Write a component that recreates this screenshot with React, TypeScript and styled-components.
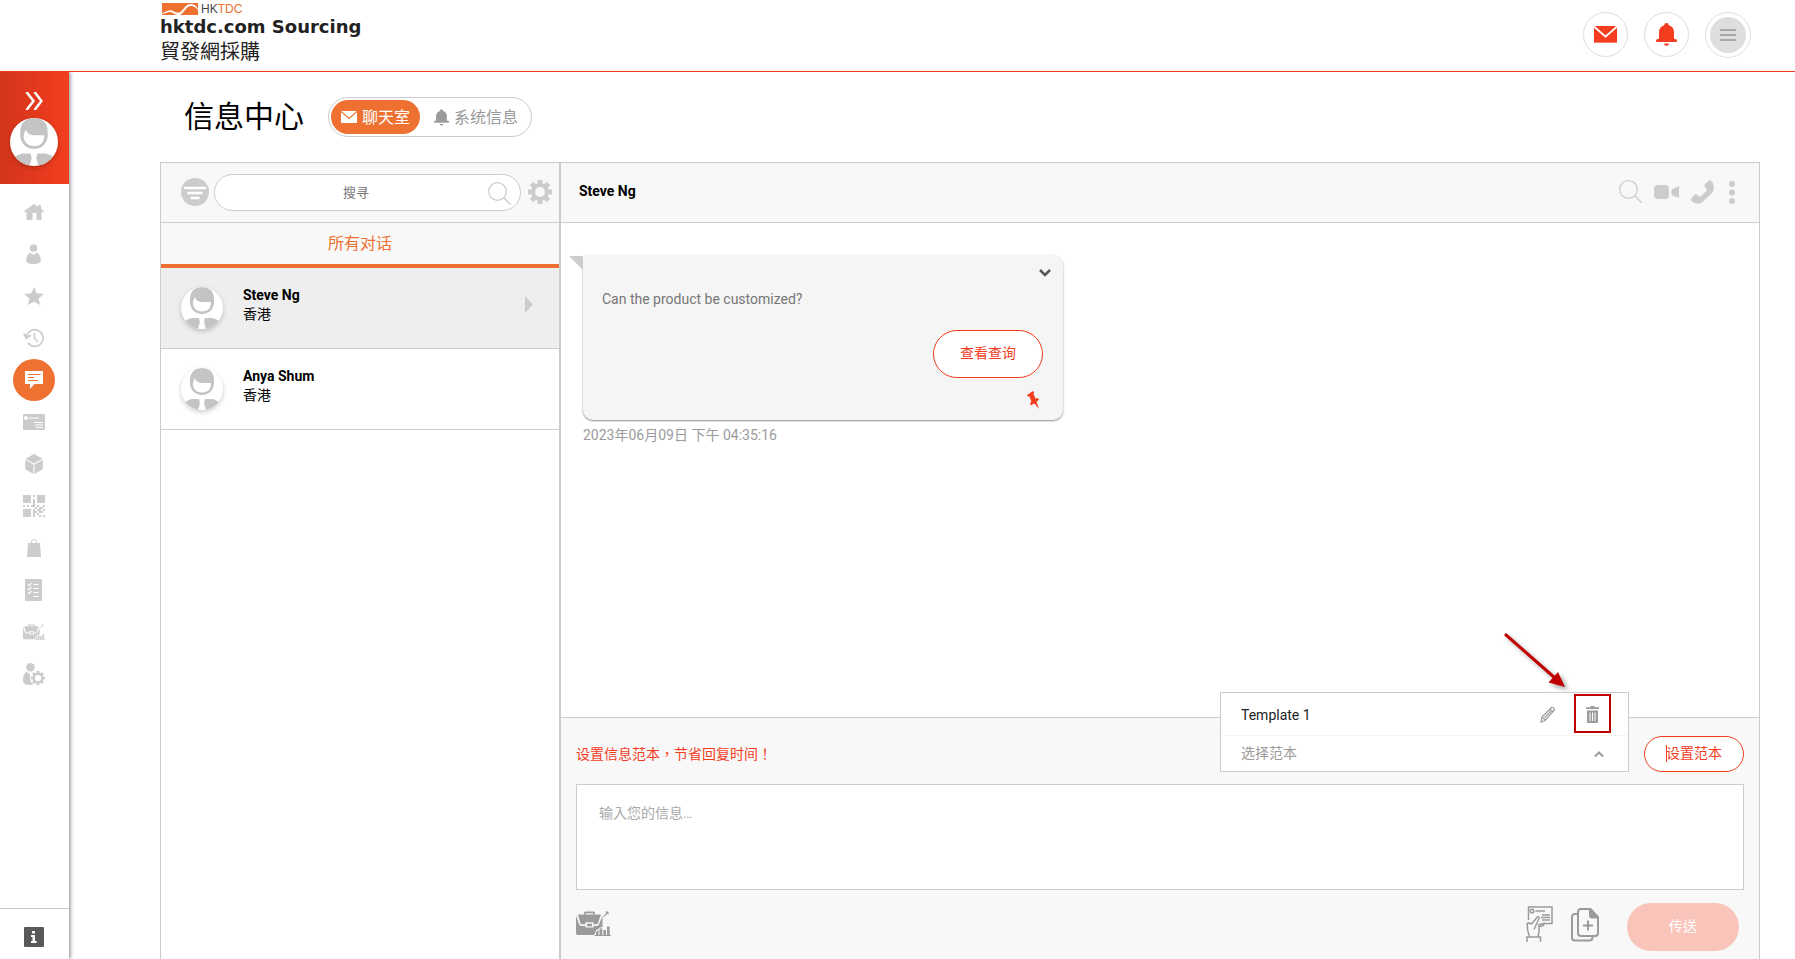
import React from 'react';
import styled, { createGlobalStyle } from 'styled-components';

const color = {
  red: '#f43d1f',
  orange: '#ee7132',
  line: '#cccccc',
  icon: '#cccccc',
  muted: '#9b9b9b',
  panel: '#f8f8f8',
};

const GlobalStyle = createGlobalStyle`
  *, *::before, *::after { box-sizing: border-box; }
  body {
    margin: 0;
    background: #fff;
    color: #000;
    font: 14px/19px Roboto, "Noto Sans CJK TC", sans-serif;
  }
  button, input, textarea { font: inherit; color: inherit; }
  button { padding: 0; border: 0; background: none; cursor: pointer; }
  svg { display: block; flex: none; }
`;

/* ---------- page frame ---------- */

const Page = styled.div`
  display: flex;
  flex-direction: column;
  min-height: 100vh;
`;

const TopBar = styled.header`
  display: flex;
  justify-content: space-between;
  align-items: flex-start;
  height: 72px;
  padding: 0 44px 0 160px;
  border-bottom: 1px solid ${color.red};
`;

const Logo = styled.a`
  display: block;
  padding-top: 3px;
  color: #222;
  text-decoration: none;
`;

const LogoMark = styled.span`
  display: flex;
  gap: 1px;
  font: 12px/12px "Liberation Sans", sans-serif;
  color: #444;

  em {
    font-style: normal;
    color: ${color.orange};
  }
`;

const LogoName = styled.span`
  display: block;
  font: bold 18px/24px "DejaVu Sans", sans-serif;
`;

const LogoNameChinese = styled.span`
  display: block;
  font: 400 20px/24px "Noto Sans CJK TC", sans-serif;
`;

const TopActions = styled.nav`
  display: flex;
  gap: 16px;
  padding-top: 12px;
`;

const RoundButton = styled.button`
  display: grid;
  place-items: center;
  width: 45px;
  height: 45px;
  border: 1px solid #dedede;
  border-radius: 50%;
  background: #fff;
  color: ${color.red};
`;

const MenuButton = styled(RoundButton)`
  width: 46px;
  height: 46px;
`;

const MenuDisc = styled.span`
  display: grid;
  place-items: center;
  width: 36px;
  height: 36px;
  border-radius: 50%;
  background: #dedede;
`;

const Body = styled.div`
  display: flex;
  flex: 1;
`;

/* ---------- sidebar ---------- */

const Sidebar = styled.aside`
  display: flex;
  flex-direction: column;
  flex: none;
  width: 69px;
  box-shadow: 1px 0 4px rgba(0, 0, 0, 0.5);
  clip-path: inset(0 -8px 0 0);
`;

const SidebarProfile = styled.div`
  display: flex;
  flex-direction: column;
  align-items: center;
  gap: 8px;
  height: 112px;
  padding: 20px 2px 0 0;
  background: linear-gradient(90deg, #d1351b, ${color.red});
`;

const SidebarNav = styled.nav`
  display: flex;
  flex-direction: column;
  flex: 1;
  padding: 7px 2px 0 0;
`;

const NavLink = styled.a<{ $active?: boolean }>`
  display: grid;
  place-items: center;
  width: 42px;
  height: 42px;
  margin: 0 auto;
  border-radius: 50%;
  color: ${(p) => (p.$active ? '#fff' : color.icon)};
  background: ${(p) => (p.$active ? color.orange : 'transparent')};
`;

const SidebarFooter = styled.div`
  display: flex;
  justify-content: center;
  height: 51px;
  padding: 18px 2px 0 0;
  border-top: 1px solid ${color.line};
`;

const AvatarDisc = styled.span<{ $size: number }>`
  display: block;
  flex: none;
  width: ${(p) => p.$size}px;
  height: ${(p) => p.$size}px;
  overflow: hidden;
  border-radius: 50%;
  background: #fff;
  box-shadow: 0 2px 5px rgba(0, 0, 0, 0.2);
`;

/* ---------- main ---------- */

const Main = styled.main`
  display: flex;
  flex-direction: column;
  flex: 1;
  min-width: 0;
  padding: 25px 35px 0 91px;
`;

const TitleRow = styled.div`
  display: flex;
  align-items: center;
  gap: 24px;
  height: 40px;
  margin-bottom: 25px;
  padding-left: 24px;
`;

const Title = styled.h1`
  margin: 0;
  font-size: 30px;
  line-height: 40px;
  font-weight: 400;
`;

const Switcher = styled.div`
  display: flex;
  height: 40px;
  padding: 2px;
  border: 1px solid ${color.line};
  border-radius: 20px;
`;

const SwitcherTab = styled.button<{ $active?: boolean }>`
  display: flex;
  align-items: center;
  gap: 5px;
  height: 34px;
  padding: 0 ${(p) => (p.$active ? '10px' : '11px 0 14px')};
  border-radius: 17px;
  font-size: 16px;
  color: ${(p) => (p.$active ? '#fff' : color.muted)};
  background: ${(p) => (p.$active ? color.orange : 'transparent')};
`;

const Workspace = styled.div`
  display: grid;
  grid-template-columns: 400px minmax(0, 1fr);
  flex: 1;
  border: solid ${color.line};
  border-width: 1px 1px 0;
`;

const Column = styled.section`
  display: flex;
  flex-direction: column;
  min-width: 0;
`;

const ListColumn = styled(Column)`
  border-right: 2px solid ${color.line};
`;

const ColumnHeader = styled.div`
  display: flex;
  align-items: center;
  height: 60px;
  border-bottom: 1px solid ${color.line};
  background: ${color.panel};
`;

const SearchHeader = styled(ColumnHeader)`
  gap: 5px;
  padding: 0 7px 1px 20px;
`;

const IconButton = styled.button`
  display: grid;
  place-items: center;
  flex: none;
  color: ${color.icon};
`;

const SearchBox = styled.div`
  display: flex;
  align-items: center;
  flex: 1;
  min-width: 0;
  height: 37px;
  margin-right: 2px;
  padding: 2px 9px 0;
  border: 1px solid ${color.line};
  border-radius: 19px;
  background: #fff;

  input {
    flex: 1;
    min-width: 0;
    padding: 0 0 2px;
    border: 0;
    outline: 0;
    background: none;
    font-size: 13px;
    text-align: center;
  }
  input::placeholder { color: #757575; }
`;

const ListTab = styled.button`
  height: 45px;
  border-bottom: 4px solid ${color.orange};
  background: ${color.panel};
  color: ${color.orange};
  font-size: 16px;
`;

const Contacts = styled.ul`
  margin: 0;
  padding: 0;
  list-style: none;
`;

const ContactRow = styled.button<{ $active?: boolean }>`
  display: flex;
  align-items: center;
  gap: 20px;
  width: 100%;
  height: 81px;
  padding: 0 26px 0 20px;
  border-bottom: 1px solid ${color.line};
  background: ${(p) => (p.$active ? '#eeeeee' : '#fff')};
  text-align: left;
`;

const ContactText = styled.span`
  flex: 1;
  height: 44px;

  strong, span { display: block; }
`;

const ContactArrow = styled.span`
  height: 25px;
  color: ${color.icon};
`;

const ChatHeader = styled(ColumnHeader)`
  gap: 12px;
  padding: 0 23px 2px 18px;

  h2 {
    flex: 1;
    margin: 0;
    font-size: 14px;
    line-height: 19px;
  }
`;

const Messages = styled.div`
  flex: 1;
  padding: 32px 22px;
`;

const Bubble = styled.article`
  position: relative;
  display: flex;
  flex-direction: column;
  align-items: flex-end;
  width: 480px;
  max-width: 100%;
  height: 165px;
  padding: 14px 20px 10px 19px;
  border-radius: 0 10px 10px 10px;
  background: #f5f5f5;
  box-shadow: 0 1px 2px rgba(0, 0, 0, 0.45);

  &::before {
    content: '';
    position: absolute;
    top: 1px;
    right: 100%;
    border: 7px solid transparent;
    border-top-color: ${color.line};
    border-right-color: ${color.line};
  }

  p {
    align-self: stretch;
    margin: 13px 0 21px;
    color: #777;
  }
`;

const BubbleToggle = styled.button`
  margin-right: -8px;
  color: #555;
`;

const PinMark = styled.span`
  margin: 13px 4px 0 0;
  color: ${color.red};
`;

const OutlineButton = styled.button<{ $large?: boolean }>`
  position: relative;
  flex: none;
  width: ${(p) => (p.$large ? 110 : 100)}px;
  height: ${(p) => (p.$large ? 48 : 36)}px;
  padding-bottom: 2px;
  border: 1px solid ${color.red};
  border-radius: 24px;
  background: #fff;
  color: ${color.red};
`;

const TextCursor = styled.i`
  position: absolute;
  top: 8px;
  left: 21px;
  width: 1px;
  height: 17px;
  background: ${color.red};
`;

const Timestamp = styled.time`
  display: block;
  padding-top: 6px;
  color: ${color.muted};
`;

/* ---------- composer ---------- */

const Composer = styled.form`
  display: flex;
  flex-direction: column;
  padding: 18px 15px 8px;
  border-top: 1px solid ${color.line};
  background: ${color.panel};
`;

const TemplateRow = styled.div`
  display: flex;
  align-items: center;
  gap: 15px;
  margin-bottom: 12px;

  p {
    flex: 1;
    margin: 0;
    color: ${color.red};
  }
`;

const TemplatePicker = styled.div`
  position: relative;
  width: 409px;
  height: 36px;
`;

const PickerTrigger = styled.button`
  display: flex;
  align-items: center;
  justify-content: space-between;
  width: 100%;
  height: 36px;
  padding: 0 24px 0 20px;
  border: solid ${color.line};
  border-width: 0 1px 1px;
  background: #fff;
  color: ${color.muted};
`;

const PickerMenu = styled.ul`
  position: absolute;
  right: 0;
  bottom: 100%;
  left: 0;
  margin: 0;
  padding: 0;
  border: solid ${color.line};
  border-width: 1px 1px 0;
  background: #fff;
  list-style: none;
`;

const PickerItem = styled.li`
  display: flex;
  align-items: center;
  gap: 30px;
  height: 43px;
  padding: 2px 29px 0 20px;
  border-bottom: 1px solid #f5f5f5;
  color: #222;

  span { flex: 1; }
`;

const ItemAction = styled.button`
  position: relative;
  padding-bottom: 2px;
  color: ${color.muted};
`;

const Highlight = styled.i`
  position: absolute;
  inset: -12px -12px -8px;
  border: 2px solid #c00000;
`;

const Pointer = styled.svg`
  position: absolute;
  right: 33px;
  bottom: 36px;
  filter: drop-shadow(3px 3px 2px rgba(0, 0, 0, 0.35));
`;

const MessageField = styled.textarea`
  display: block;
  width: 100%;
  height: 106px;
  padding: 19px 22px;
  border: 1px solid ${color.line};
  border-radius: 0;
  outline: 0;
  background: #fff;
  resize: none;

  &::placeholder { color: #aaa; }
`;

const ComposerActions = styled.div`
  display: flex;
  align-items: flex-start;
  justify-content: space-between;
  padding: 13px 5px 0 0;
`;

const ToolGroup = styled.div`
  display: flex;
  align-items: flex-end;
  gap: 18px;
  padding-top: 3px;
`;

const LeftTools = styled(ToolGroup)`
  padding-top: 8px;
`;

const SendGroup = styled.div`
  display: flex;
  align-items: flex-start;
  gap: 28px;
`;

const ToolButton = styled(IconButton)`
  color: ${color.muted};
`;

const SendButton = styled.button`
  width: 112px;
  height: 48px;
  padding-bottom: 2px;
  border-radius: 24px;
  background: #f9c5bb;
  color: #fff;
`;

/* ---------- icons ---------- */

type IconProps = { w: number; h: number; box?: string; children: React.ReactNode };

const Icon = ({ w, h, box, children }: IconProps) => (
  <svg width={w} height={h} viewBox={box ?? `0 0 ${w} ${h}`} fill="currentColor" aria-hidden="true">
    {children}
  </svg>
);

const Avatar = ({ size }: { size: number }) => (
  <AvatarDisc $size={size}>
    <Icon w={size} h={size} box="0 0 42 42">
      <g fill="#c4c4c4">
        <path d="M9 12C9 4 14 0 21 0s12 4 12 12v3c0 7-5 12-12 12S9 22 9 15z" />
        <path d="M2 36c3-3 6-5 11-5h4c2 0 1 2 2 4l-2 7H2zM40 36c-3-3-6-5-11-5h-4c-2 0-1 2-2 4l2 7h15z" />
      </g>
      <path
        d="M14 10c1 4 4 5 8 5l8 0c0 6-3 9.500-9 9.500s-9-4-9-8.500c0-3 1-4 2-6z"
        fill="#fff"
      />
    </Icon>
  </AvatarDisc>
);

const Envelope = ({ w, h }: { w: number; h: number }) => (
  <Icon w={w} h={h} box="0 0 23 17">
    <path d="M0 0h23v17H0z" opacity=".3" />
    <path d="M1 0h21l-10.500 9.500z" />
    <path d="M0 1.500 11.500 12 23 1.500V16.500H0z" />
    <path d="M0 .8 11.500 10.500 23 .8" fill="none" stroke="#fff" strokeWidth="1.600" />
  </Icon>
);

const TabEnvelope = () => (
  <Icon w={16} h={12}>
    <path d="M0 0h16v12H0z" />
    <path d="m0 .5 8 7 8-7" fill="none" stroke={color.orange} strokeWidth="1.200" />
  </Icon>
);

const Bell = ({ w, h }: { w: number; h: number }) => (
  <Icon w={w} h={h} box="0 0 21 23">
    <path d="M10.500 0a2.300 2.300 0 0 1 2.300 2.300c3.400 1 5.200 3.600 5.200 7V15c0 .8.600 1.200 1.600 1.200.9 0 1.400.7 1.400 1.500S20.500 19 19.700 19H1.300C.5 19 0 18.500 0 17.700s.5-1.500 1.400-1.500C2.400 16.200 3 15.800 3 15V9.300c0-3.400 1.800-6 5.200-7A2.300 2.300 0 0 1 10.500 0zM8 20.500h5c-.4 1.500-1.200 2.300-2.500 2.300S8.400 22 8 20.500z" />
  </Icon>
);

const Magnifier = () => (
  <Icon w={23} h={23}>
    <g fill="none" stroke="currentColor">
      <circle cx="9.500" cy="9.500" r="8.800" strokeWidth="1.200" />
      <path d="m16 16 6.500 6.500" strokeWidth="1.500" />
    </g>
  </Icon>
);

const toothAngles = [0, 45, 90, 135, 180, 225, 270, 315];

const Gear = ({ size }: { size: number }) => (
  <Icon w={size} h={size} box="0 0 24 24">
    <circle cx="12" cy="12" r="7" fill="none" stroke="currentColor" strokeWidth="4" />
    {toothAngles.map((a) => (
      <path key={a} d="M9.500 0h5v5h-5z" transform={`rotate(${a} 12 12)`} />
    ))}
  </Icon>
);

const Briefcase = ({ w, h }: { w: number; h: number }) => (
  <Icon w={w} h={h} box="0 0 35 25">
    <path d="M8 3.500V2c0-1 .8-1.500 1.800-1.500h7.400c1 0 1.800.5 1.800 1.500v1.500h-2V2.200h-7v1.300z" />
    <path d="M2 3.500h23l-3 8.500c-.4 1-.8 1.300-1.800 1.300H17.500v-2h-8v2H6c-1 0-1.400-.4-1.700-1.300z" />
    <path d="M0 4.500 3 13c.4 1.300 1.200 1.900 2.500 1.900h4v1.600h8v-1.600h3.300c1.200 0 1.900-.6 2.300-1.900L26.500 5v11l-2.500.5-4 3-2 4.500H2c-1.300 0-2-.7-2-2z" />
    <path d="M11 12.800h5v2.400h-5zM20 21l2.500-2v5H20zM23.500 17.500h2.700v6.500h-2.700zM27.300 19h2.700v5h-2.700zM31 15.500h2.700V24H31zM18.500 24H35v1H18.500zM29 .5h3.500V4l-1.200-1.200L28 6l-.7-.7 3-3.300z" />
  </Icon>
);

const navItems: { label: string; active?: boolean; icon: React.ReactNode }[] = [
  {
    label: '主页',
    icon: (
      <Icon w={20} h={18}>
        <path d="M10 1 20 8l-.8 1.500-1.700-.8V17h-5v-7h-4v7h-6V8.700l-1.700.8L0 8l10-7zM14 2h3v4l-3-2z" />
      </Icon>
    ),
  },
  {
    label: '帐户',
    icon: (
      <Icon w={15} h={20}>
        <circle cx="7.500" cy="4" r="3.800" />
        <path d="M4 8.500 7.500 11 11 8.500c2.500 2 3.800 4.500 3.800 7.500 0 3-3 4-7.300 4S.2 19 .2 16c0-3 1.300-5.500 3.800-7.500z" />
      </Icon>
    ),
  },
  {
    label: '收藏',
    icon: (
      <Icon w={20} h={18}>
        <path d="m10 0 2.700 6.300 7.200.7-5.400 4.500 1.700 6.500L10 14.800 3.800 18l1.700-6.500L.1 7l7.200-.7z" />
      </Icon>
    ),
  },
  {
    label: '浏览记录',
    icon: (
      <Icon w={21} h={20}>
        <g fill="none" stroke="currentColor" strokeWidth="1.700">
          <path d="M3.600 8.500a8.300 8.300 0 1 1 1.500 6.500" />
          <path d="M11.500 5v5.500l3.800 3.500" strokeWidth="1.500" />
        </g>
        <path d="m0 5.500 2.300 0 1.500 2.700L7.500 6.500 8.500 8 2.800 11.500z" />
      </Icon>
    ),
  },
  {
    label: '信息中心',
    active: true,
    icon: (
      <Icon w={20} h={20}>
        <path d="M1 1h18v13h-8.500L6 19v-5H1z" />
        <path d="M4 4.500h12.500M4 7.500h6M4 10.500h10" stroke={color.orange} />
      </Icon>
    ),
  },
  {
    label: '名片',
    icon: (
      <Icon w={22} h={16}>
        <rect width="22" height="16" rx="1" />
        <circle cx="3" cy="4" r="2" fill="#fff" />
        <path d="M6 4h10M11 8.500h9M12 11h8M13 13.500h7" stroke="#fff" strokeWidth="1.200" />
      </Icon>
    ),
  },
  {
    label: '产品',
    icon: (
      <Icon w={18} h={20}>
        <path d="M9 0 17.500 4.800 9 9.500.5 4.800zM.2 5.800l8.300 4.700V20L.2 15.200zM17.800 5.800l-8.300 4.700V20l8.300-4.800z" />
      </Icon>
    ),
  },
  {
    label: '二维码',
    icon: (
      <Icon w={22} h={22}>
        <path d="M0 0h8v8H0zM14 0h8v8h-8zM0 14h8v8H0zM10 0h2v2h-2zM10 4h2v8h2v2h-2v2h2v2h-2v4h-2v-8h2v-2h-2zM0 10h2v2H0zM4 10h2v2H4zM8 10h2v2H8zM14 10h2v2h-2zM20 10h2v2h-2zM16 12h4v2h-2v2h2v2h-4v-2h-2v-2h2zM20 14h2v2h-2zM14 18h2v2h-2zM16 20h2v2h-2zM20 20h2v2h-2z" />
      </Icon>
    ),
  },
  {
    label: '订单',
    icon: (
      <Icon w={14} h={18}>
        <path d="M4.500 5V3a2.500 2.500 0 0 1 5 0v2" fill="none" stroke="currentColor" />
        <path d="M1 4h12l1 14H0z" />
      </Icon>
    ),
  },
  {
    label: '清单',
    icon: (
      <Icon w={17} h={22}>
        <rect width="17" height="22" rx="1" />
        <g fill="none" stroke="#fff" strokeWidth="1.200">
          <path d="M8.500 5.500h5M8.500 9.500h5M8.500 13.500h5M8.500 17.500h5" />
          <path d="m3 5.500 1.200 1.200L6.500 4M3 9.500l1.200 1.200L6.500 8M3 13.500l1.200 1.200L6.500 12" />
        </g>
      </Icon>
    ),
  },
  { label: '商机', icon: <Briefcase w={22} h={16} /> },
  {
    label: '设置',
    icon: (
      <Icon w={22} h={22}>
        <circle cx="7.500" cy="4.200" r="4.200" />
        <path d="M3.500 8.500 7.500 12c-1.500 3.500 0 7.500 3 9.500-5.500 1-10.500.3-10.500-4 0-4 1-7 3.500-9z" />
        <svg x="8" y="8" width="14" height="14" viewBox="0 0 24 24">
          <circle cx="12" cy="12" r="7.300" fill="none" stroke="currentColor" strokeWidth="4" />
          {toothAngles.map((a) => (
            <path key={a} d="M9.500 0h5v5h-5z" transform={`rotate(${a} 12 12)`} />
          ))}
        </svg>
      </Icon>
    ),
  },
];

const contacts = [
  { name: 'Steve Ng', place: '香港', active: true },
  { name: 'Anya Shum', place: '香港', active: false },
];

/* ---------- page ---------- */

export default function App() {
  return (
    <Page>
      <GlobalStyle />
      <TopBar>
        <Logo href="#">
          <LogoMark>
            <Icon w={40} h={12}>
              <path d="M2 0h36v12H2z" fill={color.orange} />
              <path
                d="M0 11.500C4 10 7 7.500 10 7.300c3.500 0 5 3 9.500 2.200C23 8 25 1 31 1c4 0 7 4.200 9 7.700-3-3-5.500-5.700-9-5.700-5 0-7 7.500-11.500 9H18c-3.500 0-5-3-8-3S4 11 0 12z"
                fill="#fff"
              />
            </Icon>
            <span>
              HK<em>TDC</em>
            </span>
          </LogoMark>
          <LogoName>hktdc.com Sourcing</LogoName>
          <LogoNameChinese>貿發網採購</LogoNameChinese>
        </Logo>
        <TopActions>
          <RoundButton aria-label="信息">
            <Envelope w={23} h={17} />
          </RoundButton>
          <RoundButton aria-label="通知">
            <Bell w={21} h={23} />
          </RoundButton>
          <MenuButton aria-label="菜单">
            <MenuDisc>
              <Icon w={16} h={12}>
                <path d="M0 1h16M0 6h16M0 11h16" stroke="#a8a8a8" strokeWidth="2" />
              </Icon>
            </MenuDisc>
          </MenuButton>
        </TopActions>
      </TopBar>

      <Body>
        <Sidebar>
          <SidebarProfile>
            <button aria-label="展开">
              <Icon w={18} h={18}>
                <path d="m1.500 0 7 9-7 9M9.500 0l7 9-7 9" fill="none" stroke="#fff" strokeWidth="2.500" />
              </Icon>
            </button>
            <Avatar size={48} />
          </SidebarProfile>
          <SidebarNav>
            {navItems.map((item) => (
              <NavLink key={item.label} href="#" aria-label={item.label} $active={item.active}>
                {item.icon}
              </NavLink>
            ))}
          </SidebarNav>
          <SidebarFooter>
            <a href="#" aria-label="资讯">
              <Icon w={20} h={20}>
                <rect width="20" height="20" rx="1" fill="#58595b" />
                <path d="M8 4h3v2.500H8zM7 8h4v6h1.500v2h-5.500v-2h1.500v-4H7z" fill="#fff" />
              </Icon>
            </a>
          </SidebarFooter>
        </Sidebar>

        <Main>
          <TitleRow>
            <Title>信息中心</Title>
            <Switcher>
              <SwitcherTab $active>
                <TabEnvelope />
                聊天室
              </SwitcherTab>
              <SwitcherTab>
                <Bell w={15} h={17} />
                系统信息
              </SwitcherTab>
            </Switcher>
          </TitleRow>

          <Workspace>
            <ListColumn>
              <SearchHeader>
                <IconButton aria-label="筛选">
                  <Icon w={28} h={28}>
                    <circle cx="14" cy="14" r="14" />
                    <path
                      d="M4 10h20M7.500 15h13M10.500 20h7"
                      stroke="#fff"
                      strokeWidth="2.500"
                      strokeLinecap="round"
                    />
                  </Icon>
                </IconButton>
                <SearchBox>
                  <input type="text" placeholder="搜寻" aria-label="搜寻" />
                  <IconButton aria-label="搜寻">
                    <Magnifier />
                  </IconButton>
                </SearchBox>
                <IconButton aria-label="设置">
                  <Gear size={24} />
                </IconButton>
              </SearchHeader>
              <ListTab>所有对话</ListTab>
              <Contacts>
                {contacts.map((c) => (
                  <li key={c.name}>
                    <ContactRow $active={c.active}>
                      <Avatar size={42} />
                      <ContactText>
                        <strong>{c.name}</strong>
                        <span>{c.place}</span>
                      </ContactText>
                      {c.active && (
                        <ContactArrow>
                          <Icon w={8} h={17}>
                            <path d="m0 0 8 8.500L0 17z" />
                          </Icon>
                        </ContactArrow>
                      )}
                    </ContactRow>
                  </li>
                ))}
              </Contacts>
            </ListColumn>

            <Column>
              <ChatHeader>
                <h2>Steve Ng</h2>
                <IconButton aria-label="搜寻对话">
                  <Magnifier />
                </IconButton>
                <IconButton aria-label="视频通话">
                  <Icon w={25} h={14}>
                    <rect width="15" height="14" rx="4" />
                    <path d="m17.500 4.500 7.500-3.500v12l-7.500-3z" />
                  </Icon>
                </IconButton>
                <IconButton aria-label="语音通话">
                  <Icon w={23} h={24}>
                    <path d="M14 4 18 .7c.8-.7 1.600-.6 2.200.1 3.600 4 3.500 9.200.3 12.700L12 21.500c-3.500 3.300-8 2.600-11.300-.6-.9-.9-.9-1.700-.2-2.600l2.800-3.400c.7-.8 1.600-.9 2.500-.3l2.700 1.900c.5.300.9.200 1.400-.2l5.200-5c.6-.6.8-1.100.5-1.700L13.700 6.500c-.5-1-.4-1.700.3-2.500z" />
                  </Icon>
                </IconButton>
                <IconButton aria-label="更多">
                  <Icon w={10} h={24}>
                    <circle cx="6" cy="4" r="3" />
                    <circle cx="6" cy="12.500" r="3" />
                    <circle cx="6" cy="21" r="3" />
                  </Icon>
                </IconButton>
              </ChatHeader>

              <Messages>
                <Bubble>
                  <BubbleToggle aria-label="展开信息">
                    <Icon w={12} h={8}>
                      <path d="m1 1 5 5 5-5" fill="none" stroke="currentColor" strokeWidth="2.500" />
                    </Icon>
                  </BubbleToggle>
                  <p>Can the product be customized?</p>
                  <OutlineButton $large>查看查询</OutlineButton>
                  <PinMark>
                    <Icon w={12} h={18}>
                      <path d="M0 4 6 0l1 1.500L6.500 3l2 4.500 2.700-.3.800 1.300-2.500 2.300L12 18l-4.500-5.500-3.700 1.800-.8-1.200 1.300-2.600L2.300 5.300.8 5.500z" />
                    </Icon>
                  </PinMark>
                </Bubble>
                <Timestamp dateTime="2023-06-09T16:35:16">2023年06月09日 下午 04:35:16</Timestamp>
              </Messages>

              <Composer onSubmit={(e) => e.preventDefault()}>
                <TemplateRow>
                  <p>设置信息范本，节省回复时间！</p>
                  <TemplatePicker>
                    <PickerMenu>
                      <PickerItem>
                        <span>Template 1</span>
                        <ItemAction type="button" aria-label="编辑范本">
                          <Icon w={16} h={17}>
                            <path
                              d="M1 16 2 11 11.500 1.500c1-.9 3.700 1.500 2.800 2.700L5 14.500zM10 3.200l3 2.600M2.200 11.200l2.800 3M4.500 11.800l6.500-6.800"
                              fill="none"
                              stroke="currentColor"
                              strokeWidth="1.200"
                            />
                          </Icon>
                        </ItemAction>
                        <ItemAction type="button" aria-label="删除范本">
                          <Icon w={13} h={17}>
                            <path d="M4.500 0h4v1.200H13V3H0V1.200h4.500zM1 4.500h11V16c0 .6-.4 1-1 1H2c-.6 0-1-.4-1-1z" />
                            <path d="M4 6.500V15M6.500 6.500V15M9 6.500V15" stroke="#fff" />
                          </Icon>
                          <Highlight />
                          <Pointer width="62" height="56" viewBox="0 0 62 56" aria-hidden="true">
                            <path d="m1 1 50 44" stroke="#c00000" strokeWidth="3" />
                            <path d="M61 54 44.500 49.500 54 39z" fill="#c00000" />
                          </Pointer>
                        </ItemAction>
                      </PickerItem>
                    </PickerMenu>
                    <PickerTrigger type="button" aria-haspopup="listbox" aria-expanded="true">
                      选择范本
                      <Icon w={10} h={6}>
                        <path d="m1 5.500 4-4 4 4" fill="none" stroke="currentColor" strokeWidth="2" />
                      </Icon>
                    </PickerTrigger>
                  </TemplatePicker>
                  <OutlineButton type="button">
                    <TextCursor />
                    设置范本
                  </OutlineButton>
                </TemplateRow>
                <MessageField placeholder="输入您的信息…" aria-label="信息" />
                <ComposerActions>
                  <LeftTools>
                    <ToolButton type="button" aria-label="商机">
                      <Briefcase w={35} h={25} />
                    </ToolButton>
                  </LeftTools>
                  <SendGroup>
                    <ToolGroup>
                      <ToolButton type="button" aria-label="发送名片">
                        <Icon w={27} h={36}>
                          <g fill="none" stroke="currentColor" strokeWidth="1.500">
                            <path d="M2.500 14V1h23.500v16.500H17" />
                            <circle cx="6" cy="5" r="1.800" />
                            <path d="M9.500 5H19M16 9h8M15 11.500h9M16 14h8" strokeWidth="1.300" />
                            <path d="M3.500 30.500C1.500 26 1 22 1.200 17.500c1.500-.6 3-.5 4.300.5l5.500-6.500c1-1.200 2.500-.5 2 1L10.500 18 8 23.500M12 19l6-1.500c0 2.500-2 3-5 3V26l-1 4.500M1 36v-5h13.500v5" />
                          </g>
                        </Icon>
                      </ToolButton>
                      <ToolButton type="button" aria-label="添加附件">
                        <Icon w={28} h={34}>
                          <g fill="none" stroke="currentColor" strokeWidth="2">
                            <path d="M6.500 6H4a3 3 0 0 0-3 3v20.500a3 3 0 0 0 3 3h14.500a3 3 0 0 0 3-3V28" />
                            <path d="M10 1h9.500L27 9v16a3 3 0 0 1-3 3H10a3 3 0 0 1-3-3V4a3 3 0 0 1 3-3z" />
                            <path d="M17 12.500v10M12 17.500h10" />
                          </g>
                          <path d="M18 1h2l7 8v1.500h-6a3 3 0 0 1-3-3z" />
                        </Icon>
                      </ToolButton>
                    </ToolGroup>
                    <SendButton type="submit">传送</SendButton>
                  </SendGroup>
                </ComposerActions>
              </Composer>
            </Column>
          </Workspace>
        </Main>
      </Body>
    </Page>
  );
}
